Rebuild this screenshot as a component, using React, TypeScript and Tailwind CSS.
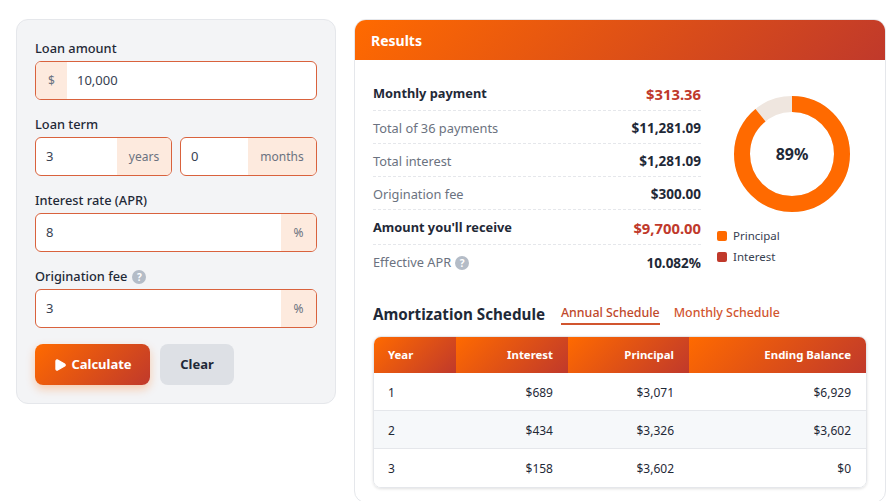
import type { ReactNode } from 'react';
import { Play } from 'lucide-react';

const grad = 'bg-[linear-gradient(135deg,#ff6a00,#c0392b)]';
const font = "font-['Noto_Sans',sans-serif]";

function Help({ size = 'w-[14px] h-[14px]' }: { size?: string }) {
  return (
    <span className={`${size} inline-flex items-center justify-center rounded-full bg-[#b4bcc7] text-white text-[10px] font-bold leading-none`}>
      ?
    </span>
  );
}

function Addon({ children, className = '' }: { children: ReactNode; className?: string }) {
  return (
    <span className={`flex items-center justify-center bg-[#fdeade] text-[#6b7280] text-[12px] ${className}`}>
      {children}
    </span>
  );
}

function Field({ label, help, children }: { label: string; help?: boolean; children: ReactNode }) {
  return (
    <div className="mb-[13px]">
      <div className="flex items-center gap-[5px] h-[23px] mb-[1px] text-[12.8px] font-medium text-[#1f2937]">
        {label}
        {help && <Help />}
      </div>
      <div className="flex gap-2">{children}</div>
    </div>
  );
}

function Box({ children, className = 'flex-1' }: { children: ReactNode; className?: string }) {
  return (
    <div className={`flex h-[39px] overflow-hidden rounded-md border border-[#d9623d] bg-white text-[13px] text-[#374151] ${className}`}>
      {children}
    </div>
  );
}

const summary = [
  { label: 'Total of 36 payments', value: '$11,281.09' },
  { label: 'Total interest', value: '$1,281.09' },
  { label: 'Origination fee', value: '$300.00' },
];

const rows = [
  ['1', '$689', '$3,071', '$6,929'],
  ['2', '$434', '$3,326', '$3,602'],
  ['3', '$158', '$3,602', '$0'],
];

function SummaryRow({ label, value, strong, last, help, height }: { label: string; value: string; strong?: boolean; last?: boolean; help?: boolean; height: string }) {
  return (
    <div className={`flex items-center justify-between ${height} ${last ? '' : 'border-b border-dashed border-[#e5e7eb]'}`}>
      <span className={`flex items-center gap-1 text-[12.8px] ${strong ? 'font-bold text-[#1f2937]' : 'text-[#6b7280]'}`}>
        {label}
        {help && <Help />}
      </span>
      <span className={`font-bold ${strong ? 'text-[14.8px] text-[#c0392b]' : 'text-[13.5px] text-[#1f2937]'}`}>{value}</span>
    </div>
  );
}

export default function App() {
  return (
    <div className={`${font} flex items-start gap-[18px] h-[501px] overflow-hidden bg-white pl-4 pr-[7px] pt-[19px]`}>
      {/* Form */}
      <div className="w-[320px] h-[385px] shrink-0 rounded-xl border border-[#e5e7eb] bg-[#f3f4f6] px-[18px] pt-[17px]">
        <Field label="Loan amount">
          <Box>
            <Addon className="w-[31px]">$</Addon>
            <span className="flex items-center pl-[10px]">10,000</span>
          </Box>
        </Field>
        <Field label="Loan term">
          <Box className="w-[137px]">
            <span className="flex flex-1 items-center pl-[10px]">3</span>
            <Addon className="w-[54px]">years</Addon>
          </Box>
          <Box className="flex-1">
            <span className="flex flex-1 items-center pl-[10px]">0</span>
            <Addon className="w-[68px]">months</Addon>
          </Box>
        </Field>
        <Field label="Interest rate (APR)">
          <Box>
            <span className="flex flex-1 items-center pl-[10px]">8</span>
            <Addon className="w-[35px]">%</Addon>
          </Box>
        </Field>
        <Field label="Origination fee" help>
          <Box>
            <span className="flex flex-1 items-center pl-[10px]">3</span>
            <Addon className="w-[35px]">%</Addon>
          </Box>
        </Field>
        <div className="flex gap-[10px] pt-[3px]">
          <button className={`${grad} flex h-[41px] w-[115px] items-center justify-center gap-[4px] rounded-lg text-[13px] font-bold text-white shadow-[0_4px_10px_rgba(255,106,0,0.3)]`}>
            <Play size={14} fill="currentColor" />
            Calculate
          </button>
          <button className="h-[41px] w-[74px] rounded-lg bg-[#dde0e5] text-[13px] font-bold text-[#1f2937]">Clear</button>
        </div>
      </div>

      {/* Results */}
      <div className="flex-1 h-[484px] overflow-hidden rounded-xl border border-[#e5e7eb] bg-white">
        <div className={`${grad} flex h-[40px] items-center px-4 text-[14px] font-bold text-white`}>Results</div>
        <div className="px-[18px] pt-[16px]">
          <div className="flex">
            <div className="w-[328px]">
              <SummaryRow label="Monthly payment" value="$313.36" strong height="h-[35px] pt-[2px]" />
              {summary.map((s) => (
                <SummaryRow key={s.label} label={s.label} value={s.value} height="h-[33px] pt-[3px]" />
              ))}
              <SummaryRow label="Amount you'll receive" value="$9,700.00" strong height="h-[35px] pt-[2px]" />
              <SummaryRow label="Effective APR" value="10.082%" last help height="h-[36px]" />
            </div>
            <div className="ml-[16px] flex-1 pt-[20px]">
              <div className="relative mx-auto h-[116px] w-[116px]">
                <svg viewBox="0 0 116 116" className="h-full w-full">
                  <circle cx="58" cy="58" r="50" fill="none" stroke="#efe6df" strokeWidth="16" />
                  <circle
                    cx="58"
                    cy="58"
                    r="50"
                    fill="none"
                    stroke="#ff6a00"
                    strokeWidth="16"
                    strokeDasharray="279.6 314.2"
                    transform="rotate(-90 58 58)"
                  />
                </svg>
                <span className="absolute inset-0 flex items-center justify-center text-[16px] font-bold text-[#1f2937]">89%</span>
              </div>
              <div className="mt-[13px] text-[11.5px] text-[#374151]">
                <div className="flex h-[21px] items-center gap-[6px]">
                  <span className="h-[10px] w-[10px] rounded-[2px] bg-[#ff6a00]" />
                  Principal
                </div>
                <div className="flex h-[21px] items-center gap-[6px]">
                  <span className="h-[10px] w-[10px] rounded-[2px] bg-[#c0392b]" />
                  Interest
                </div>
              </div>
            </div>
          </div>

          <div className="mt-[22px] flex items-center">
            <span className="text-[15.2px] font-bold text-[#1f2937]">Amortization Schedule</span>
            <span className="ml-[16px] border-b-2 border-[#d1552f] text-[12.4px] font-medium text-[#c0492b]">Annual Schedule</span>
            <span className="ml-[14px] pb-[2px] text-[12.4px] font-medium text-[#d1552f]">Monthly Schedule</span>
          </div>

          <div className="mt-[10px] overflow-hidden rounded-lg border border-[#e5e7eb] shadow-[0_1px_3px_rgba(0,0,0,0.12)]">
            <table className="w-full border-collapse text-[12px]">
              <thead>
                <tr className="h-[36px] text-[11.4px] text-white">
                  <th className={`${grad} w-[82px] pl-[14px] text-left font-bold`}>Year</th>
                  <th className={`${grad} w-[112px] pr-[15px] text-right font-bold`}>Interest</th>
                  <th className={`${grad} w-[121px] pr-[15px] text-right font-bold`}>Principal</th>
                  <th className={`${grad} pr-[15px] text-right font-bold`}>Ending Balance</th>
                </tr>
              </thead>
              <tbody className="text-[#1f2937]">
                {rows.map((r, i) => (
                  <tr key={r[0]} className={`h-[38px] ${i < 2 ? 'border-b border-[#e5e7eb]' : ''} ${i === 1 ? 'bg-[#f6f8fa]' : 'bg-white'}`}>
                    <td className="pl-[14px] pt-[2px]">{r[0]}</td>
                    <td className="pr-[15px] pt-[2px] text-right">{r[1]}</td>
                    <td className="pr-[15px] pt-[2px] text-right">{r[2]}</td>
                    <td className="pr-[15px] pt-[2px] text-right">{r[3]}</td>
                  </tr>
                ))}
              </tbody>
            </table>
          </div>
        </div>
      </div>
    </div>
  );
}
